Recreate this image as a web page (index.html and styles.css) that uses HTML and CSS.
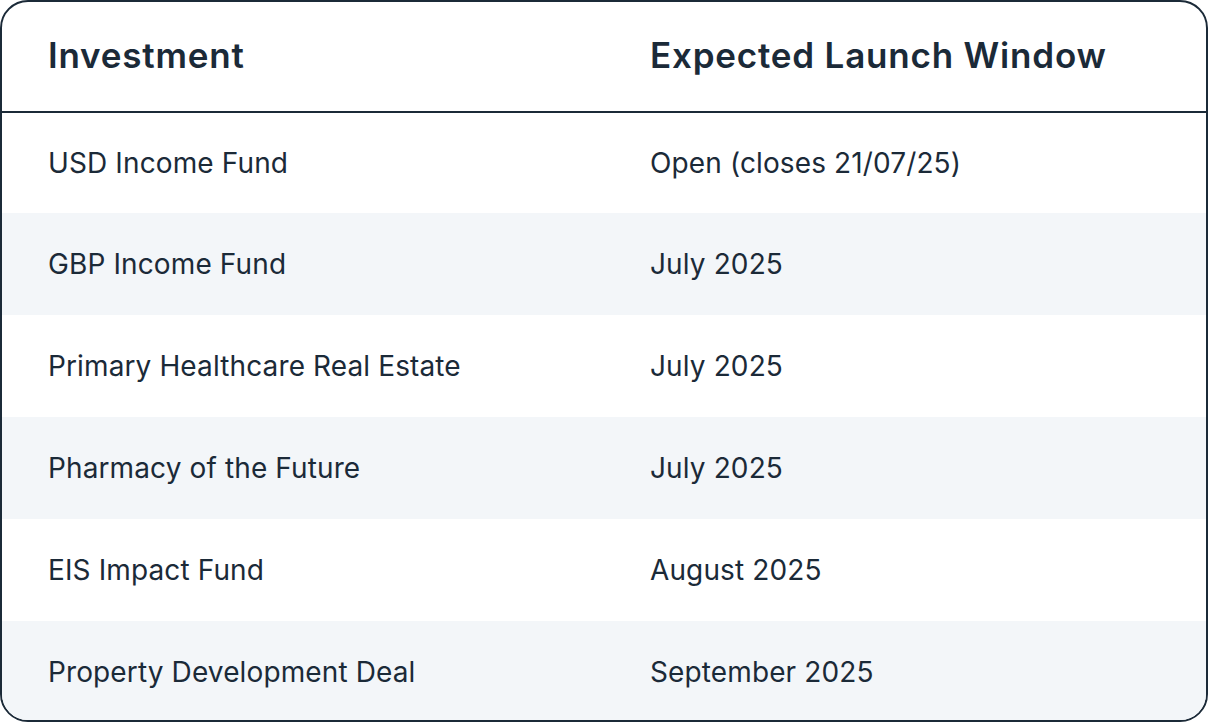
FILE: index.html
```html
<!DOCTYPE html>
<html lang="en">
<head>
<meta charset="utf-8">
<link rel="stylesheet" href="styles.css">
</head>
<body>
<div class="card">
  <table class="launch-table">
    <thead>
      <tr><th>Investment</th><th>Expected Launch Window</th></tr>
    </thead>
    <tbody>
      <tr><td>USD Income Fund</td><td>Open (closes 21/07/25)</td></tr>
      <tr><td>GBP Income Fund</td><td>July 2025</td></tr>
      <tr><td>Primary Healthcare Real Estate</td><td>July 2025</td></tr>
      <tr><td>Pharmacy of the Future</td><td>July 2025</td></tr>
      <tr><td>EIS Impact Fund</td><td>August 2025</td></tr>
      <tr><td>Property Development Deal</td><td>September 2025</td></tr>
    </tbody>
  </table>
</div>
</body>
</html>
```
FILE: styles.css
```css
html, body {
  margin: 0;
  padding: 0;
  background: #ffffff;
}
body {
  font-family: Inter, "Noto Sans", sans-serif;
  color: #1b2a38;
}
.card {
  width: 1208px;
  height: 722px;
  box-sizing: border-box;
  border: 2px solid #1b2a38;
  border-radius: 28px;
  overflow: hidden;
  background: #ffffff;
}
.launch-table {
  width: 100%;
  border-collapse: collapse;
  table-layout: fixed;
}
.launch-table th {
  text-align: left;
  font-weight: 600;
  font-size: 35px;
  letter-spacing: 0.8px;
  height: 110px;
  padding: 0 0 4px 46px;
  border-bottom: 2px solid #1b2a38;
  box-sizing: border-box;
}
.launch-table th + th,
.launch-table td + td {
  padding-left: 46px;
}
.launch-table td {
  font-size: 28px;
  font-weight: 400;
  letter-spacing: 0.12px;
  height: 102px;
  padding: 0 0 0 46px;
  box-sizing: border-box;
}
.launch-table tbody tr:first-child td {
  height: 101px;
}
.launch-table tbody tr:nth-child(even) {
  background: #f3f6f9;
}
```
